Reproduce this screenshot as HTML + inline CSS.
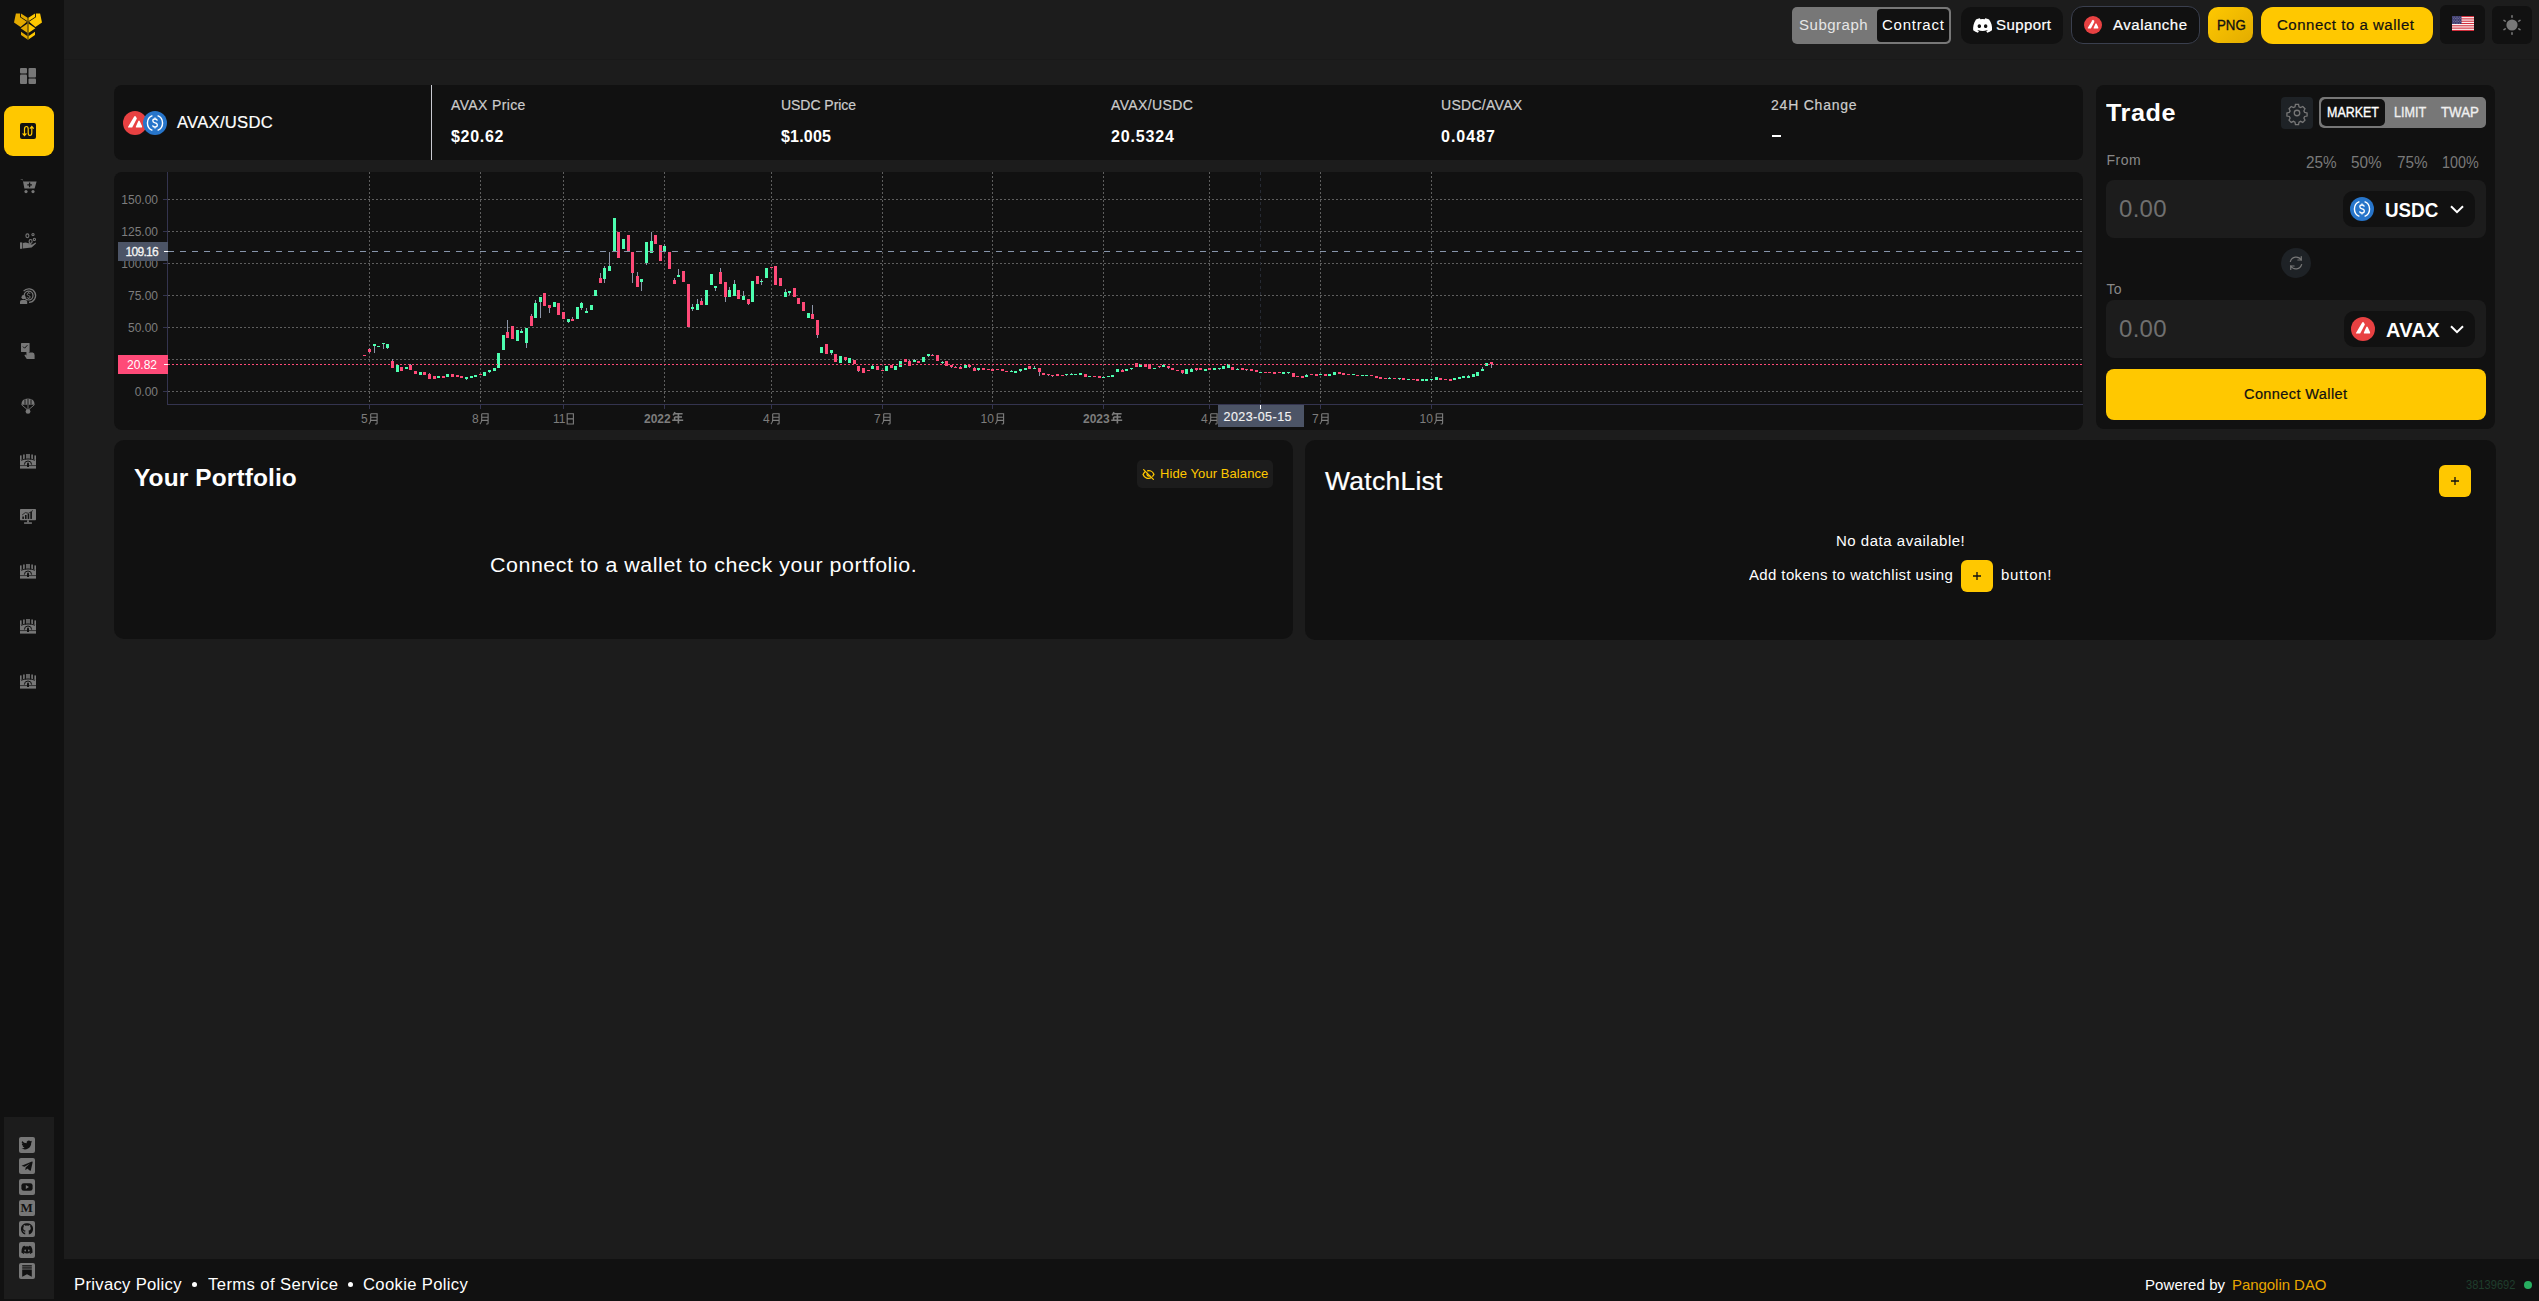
<!DOCTYPE html><html><head><meta charset="utf-8"><title>Pangolin</title><style>
*{margin:0;padding:0;box-sizing:border-box}
html,body{width:2539px;height:1301px;overflow:hidden;background:#1c1c1c;font-family:"Liberation Sans",sans-serif}
.t{position:absolute;white-space:nowrap}
.b{position:absolute}
svg{position:absolute;overflow:visible}
svg text{font-family:"Liberation Sans",sans-serif}
</style></head><body>
<div class="b" style="left:0px;top:0px;width:64px;height:1301px;background:#111111;border-radius:0px;"></div>
<div class="b" style="left:64px;top:1259px;width:2475px;height:42px;background:#111111;border-radius:0px;"></div>
<div class="b" style="left:64px;top:59px;width:2475px;height:1px;background:#191919;border-radius:0px;"></div>
<svg width="64" height="50" viewBox="0 -0.8 64 50" style="position:absolute;left:0;top:0"><g fill="#e3aa00"><path d="M15.9 12.6H20.1V16.4L26.9 21L20.6 26.1L14 21.6Z"/><path d="M21 12.8L27.6 17V20.4L21 16.1Z"/><path d="M20.6 27.5L27.6 22.6V32.3Z"/><path d="M21 31L27.6 35.5V38.8L21 34.2Z"/></g><g fill="#ffc800"><path d="M40.1 12.6H35.9V16.4L29.1 21L35.4 26.1L42 21.6Z"/><path d="M35 12.8L28.4 17V20.4L35 16.1Z"/><path d="M35.4 27.5L28.4 22.6V32.3Z"/><path d="M35 31L28.4 35.5V38.8L35 34.2Z"/></g><rect x="27.4" y="17.2" width="1.2" height="21.8" fill="#8a6d08"/></svg>
<svg width="16" height="16" viewBox="0 0 16 16" style="left:20px;top:68px"><g fill="#777"><rect x="0" y="0" width="7" height="5.5" rx="1"/><rect x="8.5" y="0" width="7.5" height="9.5" rx="1"/><rect x="0" y="6.5" width="7" height="9.5" rx="1"/><rect x="8.5" y="10.5" width="7.5" height="5.5" rx="1"/></g></svg>
<div class="b" style="left:4px;top:106px;width:50px;height:50px;background:#ffc800;border-radius:9px"></div>
<svg width="16" height="16" viewBox="0 0 16 16" style="left:20px;top:123px"><rect width="16" height="16" rx="2" fill="#111"/><path d="M4.5 12V6.2Q4.5 3.5 6.5 3.5Q8.2 3.5 8.2 6.2V9.8Q8.2 12.5 9.9 12.5Q11.8 12.5 11.8 9.8V4.2M2.6 10.4L4.5 12.6L6.4 10.4M9.9 5.6L11.8 3.4L13.7 5.6" fill="none" stroke="#ffc800" stroke-width="1.2"/></svg>
<svg width="17" height="16" viewBox="0 0 17 16" style="left:20px;top:178px"><g fill="#777"><path d="M0 1.2H2.6L4.4 10.4H14.6L16.6 3.4H3.2L3 2.2Z"/><circle cx="6" cy="13.6" r="1.6"/><circle cx="13" cy="13.6" r="1.6"/></g><path d="M9.6 4.6V9.2M7.3 6.9H11.9" stroke="#111" stroke-width="1.3"/></svg>
<svg width="18" height="17" viewBox="0 0 18 17" style="left:19px;top:232px"><g fill="#777"><rect x="1" y="10.4" width="2.2" height="6.4"/><path d="M3.8 11Q6.8 9.8 9.2 11.2L11.8 11.2Q12.8 11.4 12 12.4L8 13L13.2 12.6L16.6 10.6Q17.4 10.8 16.8 11.8L12.6 15.6L3.8 16.4Z"/></g><g fill="none" stroke="#777" stroke-width="1.1"><ellipse cx="8.4" cy="3.8" rx="1.5" ry="1.9"/><ellipse cx="11.6" cy="9.4" rx="1.5" ry="1.9"/><circle cx="14" cy="2.6" r="1.1"/><circle cx="15.4" cy="7.4" r="1.1"/></g></svg>
<svg width="16" height="16" viewBox="0 0 16 16" style="left:20px;top:288px"><g fill="none" stroke="#777"><path d="M3.6 3.2A6.8 6.8 0 1 1 9 14.4" stroke-width="1.3"/><circle cx="8.6" cy="7.6" r="4.4" stroke-width="1.2"/><path d="M10.2 5.9Q9.9 5 8.6 5Q7.2 5 7.2 6.3Q7.2 7.3 8.6 7.6Q10.2 7.9 10.2 9Q10.2 10.2 8.6 10.2Q7.2 10.2 7 9.2M8.6 4.2V5M8.6 10.2V11" stroke-width="1"/></g><g fill="#777"><circle cx="3.6" cy="9.2" r="2.1"/><path d="M0 16V13.8Q0 12 2 12H5.2Q7.2 12 7.2 13.8V16Z"/></g></svg>
<svg width="16" height="16" viewBox="0 0 16 16" style="left:20px;top:343px"><g fill="#777"><rect x="1" y="0" width="8.6" height="9" rx="0.6"/><path d="M6.4 6.2Q6.4 4.8 7.6 4.8Q8.8 4.8 8.8 6.2V9.4L12.6 9.6Q14.6 10 14.6 12.2V16H6.8L4.6 12.8Q4.2 11.8 5.4 11.6L6.4 12.6Z"/></g><path d="M3 3.6L4.6 5.2L7.4 2.2" fill="none" stroke="#111" stroke-width="1"/></svg>
<svg width="16" height="16" viewBox="0 0 16 16" style="left:20px;top:398px"><g fill="#777"><path d="M1.4 6.8Q1.4 0.6 8 0.6Q14.6 0.6 14.6 6.8Z"/><circle cx="8" cy="13.4" r="2.4"/></g><g stroke="#777" stroke-width="0.9" fill="none"><path d="M1.6 6.8L7 11.4M14.4 6.8L9 11.4M8 6.8V11"/></g><path d="M5 1.4V6.6M11 1.4V6.6M8 0.8V6.6" stroke="#111" stroke-width="0.9"/></svg>
<svg width="16" height="15" viewBox="0 0 16 15" style="left:20px;top:454px"><g fill="#777"><rect x="0" y="5.6" width="16" height="9"/><rect x="0" y="1.4" width="1.6" height="4.4"/><rect x="14.4" y="1.4" width="1.6" height="4.4"/><rect x="3.1" y="0.5" width="1.6" height="5"/><rect x="6.2" y="0" width="1.6" height="5.6"/><rect x="8.2" y="0" width="1.6" height="5.6"/><rect x="11.3" y="0.5" width="1.6" height="5"/></g><path d="M1 6.4Q8 3.2 15 6.4" fill="none" stroke="#111" stroke-width="0.8"/><path d="M0 11.6H16" stroke="#111" stroke-width="0.7"/><path d="M4.4 10.6A3.6 3.6 0 0 1 11.6 10.6" fill="none" stroke="#111" stroke-width="1"/><path d="M8 8.4a1 1 0 0 0-1 1V13H9V9.4a1 1 0 0 0-1-1Z" fill="#111"/></svg>
<svg width="16" height="15" viewBox="0 0 16 15" style="left:20px;top:564px"><g fill="#777"><rect x="0" y="5.6" width="16" height="9"/><rect x="0" y="1.4" width="1.6" height="4.4"/><rect x="14.4" y="1.4" width="1.6" height="4.4"/><rect x="3.1" y="0.5" width="1.6" height="5"/><rect x="6.2" y="0" width="1.6" height="5.6"/><rect x="8.2" y="0" width="1.6" height="5.6"/><rect x="11.3" y="0.5" width="1.6" height="5"/></g><path d="M1 6.4Q8 3.2 15 6.4" fill="none" stroke="#111" stroke-width="0.8"/><path d="M0 11.6H16" stroke="#111" stroke-width="0.7"/><path d="M4.4 10.6A3.6 3.6 0 0 1 11.6 10.6" fill="none" stroke="#111" stroke-width="1"/><path d="M8 8.4a1 1 0 0 0-1 1V13H9V9.4a1 1 0 0 0-1-1Z" fill="#111"/></svg>
<svg width="16" height="15" viewBox="0 0 16 15" style="left:20px;top:619px"><g fill="#777"><rect x="0" y="5.6" width="16" height="9"/><rect x="0" y="1.4" width="1.6" height="4.4"/><rect x="14.4" y="1.4" width="1.6" height="4.4"/><rect x="3.1" y="0.5" width="1.6" height="5"/><rect x="6.2" y="0" width="1.6" height="5.6"/><rect x="8.2" y="0" width="1.6" height="5.6"/><rect x="11.3" y="0.5" width="1.6" height="5"/></g><path d="M1 6.4Q8 3.2 15 6.4" fill="none" stroke="#111" stroke-width="0.8"/><path d="M0 11.6H16" stroke="#111" stroke-width="0.7"/><path d="M4.4 10.6A3.6 3.6 0 0 1 11.6 10.6" fill="none" stroke="#111" stroke-width="1"/><path d="M8 8.4a1 1 0 0 0-1 1V13H9V9.4a1 1 0 0 0-1-1Z" fill="#111"/></svg>
<svg width="16" height="15" viewBox="0 0 16 15" style="left:20px;top:674px"><g fill="#777"><rect x="0" y="5.6" width="16" height="9"/><rect x="0" y="1.4" width="1.6" height="4.4"/><rect x="14.4" y="1.4" width="1.6" height="4.4"/><rect x="3.1" y="0.5" width="1.6" height="5"/><rect x="6.2" y="0" width="1.6" height="5.6"/><rect x="8.2" y="0" width="1.6" height="5.6"/><rect x="11.3" y="0.5" width="1.6" height="5"/></g><path d="M1 6.4Q8 3.2 15 6.4" fill="none" stroke="#111" stroke-width="0.8"/><path d="M0 11.6H16" stroke="#111" stroke-width="0.7"/><path d="M4.4 10.6A3.6 3.6 0 0 1 11.6 10.6" fill="none" stroke="#111" stroke-width="1"/><path d="M8 8.4a1 1 0 0 0-1 1V13H9V9.4a1 1 0 0 0-1-1Z" fill="#111"/></svg>
<svg width="16" height="15" viewBox="0 0 18 16" style="left:20px;top:509px" preserveAspectRatio="none"><g fill="#777"><rect x="0" y="0" width="18" height="12" rx="0.8"/><rect x="8" y="12" width="2" height="2.4"/><rect x="4.6" y="14.2" width="8.8" height="1.6"/></g><g fill="#111"><rect x="2.6" y="8" width="1.8" height="2.6"/><rect x="5.6" y="6.4" width="1.8" height="4.2"/><rect x="8.6" y="5.2" width="1.8" height="5.4"/><rect x="11.6" y="3.2" width="1.8" height="7.4"/></g><path d="M2.4 6.4L6 3.8L9.6 4.6L14.6 1.6" fill="none" stroke="#111" stroke-width="0.8"/></svg>
<div class="b" style="left:4px;top:1117px;width:50px;height:182px;background:#1c1c1c"></div>
<div class="b" style="left:19px;top:1137px;width:16px;height:16px;background:#777;border-radius:2px"></div>
<div class="b" style="left:19px;top:1158px;width:16px;height:16px;background:#777;border-radius:2px"></div>
<div class="b" style="left:19px;top:1179px;width:16px;height:16px;background:#777;border-radius:2px"></div>
<div class="b" style="left:19px;top:1200px;width:16px;height:16px;background:#777;border-radius:2px"></div>
<div class="b" style="left:19px;top:1221px;width:16px;height:16px;background:#777;border-radius:2px"></div>
<div class="b" style="left:19px;top:1242px;width:16px;height:16px;background:#777;border-radius:2px"></div>
<div class="b" style="left:19px;top:1263px;width:16px;height:16px;background:#777;border-radius:2px"></div>
<svg width="16" height="16" viewBox="0 0 16 16" style="left:19px;top:1137px"><path fill="#111" d="M13.2 4.6a4 4 0 0 1-1.3.4 2.2 2.2 0 0 0 1-1.2 4.5 4.5 0 0 1-1.4.5 2.2 2.2 0 0 0-3.8 2A6.3 6.3 0 0 1 3.1 4a2.2 2.2 0 0 0 .7 3 2.2 2.2 0 0 1-1-.3 2.2 2.2 0 0 0 1.8 2.2 2.2 2.2 0 0 1-1 0 2.2 2.2 0 0 0 2 1.5A4.4 4.4 0 0 1 2.5 11.3 6.3 6.3 0 0 0 12.2 5.7a4.5 4.5 0 0 0 1-1.1Z"/></svg>
<svg width="16" height="16" viewBox="0 0 16 16" style="left:19px;top:1158px"><path fill="#111" d="M2.6 7.8L13 3.6Q13.8 3.4 13.6 4.4L11.8 12.4Q11.6 13 11 12.7L8.2 10.6L6.8 12Q6.5 12.2 6.4 11.8L6.6 9.4L11 5.4L5.6 8.8L3 8Q2.2 7.9 2.6 7.8Z"/></svg>
<svg width="16" height="16" viewBox="0 0 16 16" style="left:19px;top:1179px"><rect x="2.4" y="4.2" width="11.2" height="7.6" rx="2.4" fill="#111"/><path d="M6.8 6V10L10 8Z" fill="#777"/></svg>
<div class="t" style="left:20.5px;top:1201px;font-family:'Liberation Serif',serif;font-weight:bold;font-size:13px;line-height:13px;color:#111">M</div>
<svg width="16" height="16" viewBox="0 0 16 16" style="left:19px;top:1221px"><path fill="#111" d="M8 2.2A5.8 5.8 0 0 0 6.2 13.6V11.6Q4.6 11.8 4.2 10.6Q3.9 9.9 3.4 9.7Q3.2 9.4 3.8 9.4Q4.4 9.6 4.8 10.3Q5.4 11 6.2 10.6Q6.3 10 6.6 9.7Q4.2 9.4 4.2 7.2Q4.2 6.3 4.8 5.7Q4.6 5 4.9 4.1Q5.6 4 6.6 4.7A5.6 5.6 0 0 1 9.4 4.7Q10.4 4 11.1 4.1Q11.4 5 11.2 5.7Q11.8 6.3 11.8 7.2Q11.8 9.4 9.4 9.7Q9.8 10.1 9.8 10.8V13.6A5.8 5.8 0 0 0 8 2.2Z"/></svg>
<svg width="16" height="16" viewBox="0 0 16 16" style="left:19px;top:1242px"><path fill="#111" d="M12.2 4.4A8.4 8.4 0 0 0 10.2 3.8L9.9 4.4A7.6 7.6 0 0 0 6.1 4.4L5.8 3.8A8.4 8.4 0 0 0 3.8 4.4Q2 7.2 2.4 10.6A8.4 8.4 0 0 0 4.9 11.9L5.4 11.1A5.4 5.4 0 0 1 4.6 10.7L4.8 10.5A6 6 0 0 0 11.2 10.5L11.4 10.7A5.4 5.4 0 0 1 10.6 11.1L11.1 11.9A8.4 8.4 0 0 0 13.6 10.6Q14 7.2 12.2 4.4ZM6.2 9.4Q5.4 9.4 5.4 8.4Q5.4 7.5 6.2 7.5Q7 7.5 7 8.4Q7 9.4 6.2 9.4ZM9.8 9.4Q9 9.4 9 8.4Q9 7.5 9.8 7.5Q10.6 7.5 10.6 8.4Q10.6 9.4 9.8 9.4Z"/></svg>
<svg width="16" height="16" viewBox="0 0 16 16" style="left:19px;top:1263px"><g fill="#111"><rect x="3.2" y="2.2" width="9.6" height="1.3"/><rect x="3.2" y="4.3" width="9.6" height="1.3"/><path d="M3.2 6.4H12.8V13.8L8 11.2L3.2 13.8Z"/></g></svg>
<div class="b" style="left:1792px;top:7px;width:159px;height:37px;background:#777777;border-radius:5px;"></div>
<div class="b" style="left:1877px;top:9px;width:72px;height:33px;background:#111111;border-radius:4px;"></div>
<div class="t" style="left:1799px;top:17.75px;font-size:14px;line-height:14px;color:#e6e6e6;letter-spacing:0.494px;transform:scaleX(1.07);transform-origin:0 0;">Subgraph</div>
<div class="t" style="left:1882px;top:17.75px;font-size:14px;line-height:14px;color:#ffffff;letter-spacing:0.697px;transform:scaleX(1.07);transform-origin:0 0;">Contract</div>
<div class="b" style="left:1961px;top:7px;width:102px;height:37px;background:#111111;border-radius:10px;"></div>
<svg width="19" height="15" viewBox="0 0 71 55" style="left:1973px;top:18px"><path fill="#fff" d="M60.1 4.9A58.5 58.5 0 0 0 45.6.4a40 40 0 0 0-1.8 3.7 54 54 0 0 0-16.2 0A38 38 0 0 0 25.7.4 58.4 58.4 0 0 0 11.2 4.9C2 18.6-.5 32 .7 45.3a58.9 58.9 0 0 0 17.9 9 42 42 0 0 0 3.8-6.2 38 38 0 0 1-5.9-2.8l1.4-1.1a42 42 0 0 0 35.8 0l1.5 1.1a38 38 0 0 1-5.9 2.8 42 42 0 0 0 3.8 6.2 58.7 58.7 0 0 0 17.9-9C72.5 30 68.8 16.7 60.1 4.9ZM23.7 37.1c-3.5 0-6.4-3.2-6.4-7.2s2.8-7.2 6.4-7.2 6.5 3.3 6.4 7.2c0 4-2.8 7.2-6.4 7.2Zm23.6 0c-3.5 0-6.4-3.2-6.4-7.2s2.8-7.2 6.4-7.2 6.5 3.3 6.4 7.2c0 4-2.8 7.2-6.4 7.2Z"/></svg>
<div class="t" style="left:1996px;top:17.75px;font-size:14px;line-height:14px;color:#ffffff;letter-spacing:0.4px;-webkit-text-stroke-width:0.2px;transform:scaleX(1.07);transform-origin:0 0;">Support</div>
<div class="b" style="left:2071px;top:6px;width:129px;height:38px;background:#111111;border-radius:12px;border:1px solid #3a3f4e;"></div>
<div class="b" style="left:2084px;top:16px;width:18px;height:18px"><svg width="18" height="18" viewBox="0 0 24 24"><circle cx="12" cy="12" r="12" fill="#e84142"/><path d="M11.2 5.6Q12 4.4 12.8 5.6L13.9 7.5L9.2 16.6H5.6Q4.6 16.6 5.1 15.7Z" fill="#fff"/><path d="M15.2 10.2Q16 9 16.8 10.2L19 14.9Q19.5 16.6 18.5 16.6H13.3Q12.4 16.6 12.9 15.6Z" fill="#fff"/></svg></div>
<div class="t" style="left:2113px;top:17.75px;font-size:14px;line-height:14px;color:#ffffff;letter-spacing:0.504px;-webkit-text-stroke-width:0.2px;transform:scaleX(1.07);transform-origin:0 0;">Avalanche</div>
<div class="b" style="left:2208px;top:7px;width:45px;height:36px;background:linear-gradient(135deg,#ffc800,#e2ac00);border-radius:10px;"></div>
<div class="t" style="left:2217px;top:17.75px;font-size:14px;line-height:14px;color:#111111;transform:scaleX(0.947);transform-origin:0 0;-webkit-text-stroke-width:0.35px;">PNG</div>
<div class="b" style="left:2261px;top:7px;width:172px;height:37px;background:#ffc800;border-radius:12px;"></div>
<div class="t" style="left:2277px;top:17.75px;font-size:14px;line-height:14px;color:#111111;letter-spacing:0.495px;-webkit-text-stroke-width:0.2px;transform:scaleX(1.07);transform-origin:0 0;">Connect to a wallet</div>
<div class="b" style="left:2440px;top:5px;width:45px;height:39px;background:#111111;border-radius:6px;"></div>
<svg width="22" height="15" viewBox="0 0 22 15" style="left:2452px;top:16px"><rect width="22" height="15" fill="#fff"/><rect y="0.00" width="22" height="1.15" fill="#d22f3c"/><rect y="2.31" width="22" height="1.15" fill="#d22f3c"/><rect y="4.62" width="22" height="1.15" fill="#d22f3c"/><rect y="6.92" width="22" height="1.15" fill="#d22f3c"/><rect y="9.23" width="22" height="1.15" fill="#d22f3c"/><rect y="11.54" width="22" height="1.15" fill="#d22f3c"/><rect y="13.85" width="22" height="1.15" fill="#d22f3c"/><rect width="9.5" height="8" fill="#3c3b6e"/><circle cx="1.0" cy="1.0" r="0.35" fill="#fff"/><circle cx="2.6" cy="1.0" r="0.35" fill="#fff"/><circle cx="4.2" cy="1.0" r="0.35" fill="#fff"/><circle cx="5.8" cy="1.0" r="0.35" fill="#fff"/><circle cx="7.4" cy="1.0" r="0.35" fill="#fff"/><circle cx="1.8" cy="2.5" r="0.35" fill="#fff"/><circle cx="3.4" cy="2.5" r="0.35" fill="#fff"/><circle cx="5.0" cy="2.5" r="0.35" fill="#fff"/><circle cx="6.6" cy="2.5" r="0.35" fill="#fff"/><circle cx="8.2" cy="2.5" r="0.35" fill="#fff"/><circle cx="1.0" cy="4.0" r="0.35" fill="#fff"/><circle cx="2.6" cy="4.0" r="0.35" fill="#fff"/><circle cx="4.2" cy="4.0" r="0.35" fill="#fff"/><circle cx="5.8" cy="4.0" r="0.35" fill="#fff"/><circle cx="7.4" cy="4.0" r="0.35" fill="#fff"/><circle cx="1.8" cy="5.5" r="0.35" fill="#fff"/><circle cx="3.4" cy="5.5" r="0.35" fill="#fff"/><circle cx="5.0" cy="5.5" r="0.35" fill="#fff"/><circle cx="6.6" cy="5.5" r="0.35" fill="#fff"/><circle cx="8.2" cy="5.5" r="0.35" fill="#fff"/><circle cx="1.0" cy="7.0" r="0.35" fill="#fff"/><circle cx="2.6" cy="7.0" r="0.35" fill="#fff"/><circle cx="4.2" cy="7.0" r="0.35" fill="#fff"/><circle cx="5.8" cy="7.0" r="0.35" fill="#fff"/><circle cx="7.4" cy="7.0" r="0.35" fill="#fff"/></svg>
<div class="b" style="left:2492px;top:6px;width:40px;height:38px;background:#111111;border-radius:6px;"></div>
<svg width="20" height="20" viewBox="0 0 20 20" style="left:2502px;top:15px"><circle cx="10" cy="10" r="5.6" fill="#777"/><g stroke="#777" stroke-width="1.6" stroke-linecap="round"><line x1="10" y1="0.8" x2="10" y2="2.2"/><line x1="10" y1="17.8" x2="10" y2="19.2"/><line x1="2" y1="5.4" x2="3.2" y2="6.1"/><line x1="16.8" y1="13.9" x2="18" y2="14.6"/><line x1="2" y1="14.6" x2="3.2" y2="13.9"/><line x1="16.8" y1="6.1" x2="18" y2="5.4"/></g></svg>
<div class="b" style="left:114px;top:85px;width:1969px;height:75px;background:#111111;border-radius:8px;"></div>
<div class="b" style="left:123px;top:111px;width:24px;height:24px"><svg width="24" height="24" viewBox="0 0 24 24"><circle cx="12" cy="12" r="12" fill="#e84142"/><path d="M11.2 5.6Q12 4.4 12.8 5.6L13.9 7.5L9.2 16.6H5.6Q4.6 16.6 5.1 15.7Z" fill="#fff"/><path d="M15.2 10.2Q16 9 16.8 10.2L19 14.9Q19.5 16.6 18.5 16.6H13.3Q12.4 16.6 12.9 15.6Z" fill="#fff"/></svg></div>
<div class="b" style="left:143px;top:111px;width:24px;height:24px;border-radius:12px"><svg width="24" height="24" viewBox="0 0 24 24"><circle cx="12" cy="12" r="12" fill="#2775ca"/><path d="M9.4 4.6A8 8 0 0 0 9.4 19.4M14.6 4.6A8 8 0 0 1 14.6 19.4" fill="none" stroke="#fff" stroke-width="1.4"/><path d="M14.3 9.6Q14 8 12 8Q9.8 8 9.8 9.8Q9.8 11.4 12 11.8Q14.3 12.2 14.3 14Q14.3 16 12 16Q9.8 16 9.6 14.3M12 6.6V8M12 16V17.4" fill="none" stroke="#fff" stroke-width="1.3"/></svg></div>
<div class="t" style="left:177px;top:114.76px;font-size:16px;line-height:16px;color:#ffffff;letter-spacing:0.237px;-webkit-text-stroke-width:0.2px;transform:scaleX(1.04);transform-origin:0 0;">AVAX/USDC</div>
<div class="b" style="left:431px;top:85px;width:1px;height:75px;background:#c9cad1;border-radius:0px;"></div>
<div class="t" style="left:451px;top:98.45px;font-size:14px;line-height:14px;color:#cccccc;letter-spacing:0.36px;-webkit-text-stroke-width:0.2px;">AVAX Price</div>
<div class="t" style="left:451px;top:128.76px;font-size:16px;line-height:16px;color:#ffffff;font-weight:700;letter-spacing:0.7px;">$20.62</div>
<div class="t" style="left:781px;top:98.45px;font-size:14px;line-height:14px;color:#cccccc;letter-spacing:-0.04px;-webkit-text-stroke-width:0.2px;">USDC Price</div>
<div class="t" style="left:781px;top:128.76px;font-size:16px;line-height:16px;color:#ffffff;font-weight:700;letter-spacing:0.2px;">$1.005</div>
<div class="t" style="left:1111px;top:98.45px;font-size:14px;line-height:14px;color:#cccccc;letter-spacing:0.38px;-webkit-text-stroke-width:0.2px;">AVAX/USDC</div>
<div class="t" style="left:1111px;top:128.76px;font-size:16px;line-height:16px;color:#ffffff;font-weight:700;letter-spacing:0.83px;">20.5324</div>
<div class="t" style="left:1441px;top:98.45px;font-size:14px;line-height:14px;color:#cccccc;letter-spacing:0.29px;-webkit-text-stroke-width:0.2px;">USDC/AVAX</div>
<div class="t" style="left:1441px;top:128.76px;font-size:16px;line-height:16px;color:#ffffff;font-weight:700;letter-spacing:1.0px;">0.0487</div>
<div class="t" style="left:1771px;top:98.45px;font-size:14px;line-height:14px;color:#cccccc;letter-spacing:0.78px;-webkit-text-stroke-width:0.2px;">24H Change</div>
<div class="b" style="left:1772px;top:135px;width:9px;height:2px;background:#ffffff;border-radius:0px;"></div>
<div class="b" style="left:114px;top:172px;width:1969px;height:258px;background:#111111;border-radius:8px;"></div>
<svg class="chart" width="1969" height="258" viewBox="114 172 1969 258" style="position:absolute;left:114px;top:172px">
<line x1="168" y1="199.5" x2="2083" y2="199.5" stroke="#5e5e5e" stroke-width="1" stroke-dasharray="2 2"/>
<line x1="168" y1="231.5" x2="2083" y2="231.5" stroke="#5e5e5e" stroke-width="1" stroke-dasharray="2 2"/>
<line x1="168" y1="263.5" x2="2083" y2="263.5" stroke="#5e5e5e" stroke-width="1" stroke-dasharray="2 2"/>
<line x1="168" y1="295.5" x2="2083" y2="295.5" stroke="#5e5e5e" stroke-width="1" stroke-dasharray="2 2"/>
<line x1="168" y1="327.5" x2="2083" y2="327.5" stroke="#5e5e5e" stroke-width="1" stroke-dasharray="2 2"/>
<line x1="168" y1="359.5" x2="2083" y2="359.5" stroke="#5e5e5e" stroke-width="1" stroke-dasharray="2 2"/>
<line x1="168" y1="391.5" x2="2083" y2="391.5" stroke="#5e5e5e" stroke-width="1" stroke-dasharray="2 2"/>
<line x1="369.5" y1="172" x2="369.5" y2="404" stroke="#5e5e5e" stroke-width="1" stroke-dasharray="2 2"/>
<line x1="480.5" y1="172" x2="480.5" y2="404" stroke="#5e5e5e" stroke-width="1" stroke-dasharray="2 2"/>
<line x1="563.5" y1="172" x2="563.5" y2="404" stroke="#5e5e5e" stroke-width="1" stroke-dasharray="2 2"/>
<line x1="664.5" y1="172" x2="664.5" y2="404" stroke="#5e5e5e" stroke-width="1" stroke-dasharray="2 2"/>
<line x1="771.5" y1="172" x2="771.5" y2="404" stroke="#5e5e5e" stroke-width="1" stroke-dasharray="2 2"/>
<line x1="882.5" y1="172" x2="882.5" y2="404" stroke="#5e5e5e" stroke-width="1" stroke-dasharray="2 2"/>
<line x1="992.5" y1="172" x2="992.5" y2="404" stroke="#5e5e5e" stroke-width="1" stroke-dasharray="2 2"/>
<line x1="1103.5" y1="172" x2="1103.5" y2="404" stroke="#5e5e5e" stroke-width="1" stroke-dasharray="2 2"/>
<line x1="1209.5" y1="172" x2="1209.5" y2="404" stroke="#5e5e5e" stroke-width="1" stroke-dasharray="2 2"/>
<line x1="1320.5" y1="172" x2="1320.5" y2="404" stroke="#5e5e5e" stroke-width="1" stroke-dasharray="2 2"/>
<line x1="1431.5" y1="172" x2="1431.5" y2="404" stroke="#5e5e5e" stroke-width="1" stroke-dasharray="2 2"/>
<line x1="1260.5" y1="172" x2="1260.5" y2="404" stroke="#262a33" stroke-width="1" stroke-dasharray="3 3"/>
<line x1="167.5" y1="172" x2="167.5" y2="405" stroke="#34344f" stroke-width="1"/>
<line x1="167" y1="404.5" x2="2083" y2="404.5" stroke="#34344f" stroke-width="1"/>
<line x1="163" y1="199.5" x2="167" y2="199.5" stroke="#34344f" stroke-width="1"/>
<line x1="163" y1="231.5" x2="167" y2="231.5" stroke="#34344f" stroke-width="1"/>
<line x1="163" y1="263.5" x2="167" y2="263.5" stroke="#34344f" stroke-width="1"/>
<line x1="163" y1="295.5" x2="167" y2="295.5" stroke="#34344f" stroke-width="1"/>
<line x1="163" y1="327.5" x2="167" y2="327.5" stroke="#34344f" stroke-width="1"/>
<line x1="163" y1="359.5" x2="167" y2="359.5" stroke="#34344f" stroke-width="1"/>
<line x1="163" y1="391.5" x2="167" y2="391.5" stroke="#34344f" stroke-width="1"/>
<line x1="369.5" y1="405" x2="369.5" y2="409" stroke="#34344f" stroke-width="1"/>
<line x1="480.5" y1="405" x2="480.5" y2="409" stroke="#34344f" stroke-width="1"/>
<line x1="563.5" y1="405" x2="563.5" y2="409" stroke="#34344f" stroke-width="1"/>
<line x1="664.5" y1="405" x2="664.5" y2="409" stroke="#34344f" stroke-width="1"/>
<line x1="771.5" y1="405" x2="771.5" y2="409" stroke="#34344f" stroke-width="1"/>
<line x1="882.5" y1="405" x2="882.5" y2="409" stroke="#34344f" stroke-width="1"/>
<line x1="992.5" y1="405" x2="992.5" y2="409" stroke="#34344f" stroke-width="1"/>
<line x1="1103.5" y1="405" x2="1103.5" y2="409" stroke="#34344f" stroke-width="1"/>
<line x1="1209.5" y1="405" x2="1209.5" y2="409" stroke="#34344f" stroke-width="1"/>
<line x1="1320.5" y1="405" x2="1320.5" y2="409" stroke="#34344f" stroke-width="1"/>
<line x1="1431.5" y1="405" x2="1431.5" y2="409" stroke="#34344f" stroke-width="1"/>
<text x="158" y="203.8" text-anchor="end" font-size="12" fill="#7d7d7d">150.00</text>
<text x="158" y="235.8" text-anchor="end" font-size="12" fill="#7d7d7d">125.00</text>
<text x="158" y="267.8" text-anchor="end" font-size="12" fill="#7d7d7d">100.00</text>
<text x="158" y="299.8" text-anchor="end" font-size="12" fill="#7d7d7d">75.00</text>
<text x="158" y="331.8" text-anchor="end" font-size="12" fill="#7d7d7d">50.00</text>
<text x="158" y="363.8" text-anchor="end" font-size="12" fill="#7d7d7d">25.00</text>
<text x="158" y="395.8" text-anchor="end" font-size="12" fill="#7d7d7d">0.00</text>
<g shape-rendering="crispEdges">
<rect x="363" y="355" width="3" height="1" fill="#ff4a78"/>
<rect x="369" y="348" width="1" height="1" fill="#8c95a8"/>
<rect x="369" y="352" width="1" height="1" fill="#8c95a8"/>
<rect x="368" y="349" width="3" height="3" fill="#ff4a78"/>
<rect x="374" y="346" width="1" height="7" fill="#8c95a8"/>
<rect x="373" y="344" width="3" height="2" fill="#4dffb0"/>
<rect x="377" y="346" width="3" height="1" fill="#4dffb0"/>
<rect x="383" y="344" width="1" height="5" fill="#8c95a8"/>
<rect x="382" y="343" width="3" height="1" fill="#4dffb0"/>
<rect x="387" y="348" width="1" height="1" fill="#8c95a8"/>
<rect x="386" y="344" width="3" height="4" fill="#4dffb0"/>
<rect x="392" y="359" width="1" height="2" fill="#8c95a8"/>
<rect x="391" y="361" width="3" height="7" fill="#ff4a78"/>
<rect x="396" y="365" width="3" height="7" fill="#4dffb0"/>
<rect x="400" y="367" width="3" height="4" fill="#ff4a78"/>
<rect x="405" y="367" width="3" height="2" fill="#4dffb0"/>
<rect x="410" y="364" width="1" height="1" fill="#8c95a8"/>
<rect x="409" y="365" width="3" height="5" fill="#ff4a78"/>
<rect x="414" y="371" width="3" height="3" fill="#ff4a78"/>
<rect x="419" y="372" width="3" height="3" fill="#4dffb0"/>
<rect x="423" y="372" width="3" height="3" fill="#ff4a78"/>
<rect x="429" y="373" width="1" height="1" fill="#8c95a8"/>
<rect x="428" y="374" width="3" height="5" fill="#ff4a78"/>
<rect x="433" y="376" width="3" height="3" fill="#ff4a78"/>
<rect x="437" y="376" width="3" height="2" fill="#4dffb0"/>
<rect x="442" y="376" width="3" height="2" fill="#ff4a78"/>
<rect x="446" y="374" width="3" height="3" fill="#4dffb0"/>
<rect x="451" y="374" width="3" height="3" fill="#ff4a78"/>
<rect x="456" y="375" width="3" height="2" fill="#ff4a78"/>
<rect x="460" y="376" width="3" height="2" fill="#ff4a78"/>
<rect x="466" y="379" width="1" height="1" fill="#8c95a8"/>
<rect x="465" y="377" width="3" height="2" fill="#4dffb0"/>
<rect x="470" y="376" width="3" height="2" fill="#4dffb0"/>
<rect x="474" y="375" width="3" height="2" fill="#4dffb0"/>
<rect x="479" y="374" width="3" height="1" fill="#ff4a78"/>
<rect x="483" y="372" width="3" height="4" fill="#4dffb0"/>
<rect x="489" y="372" width="1" height="1" fill="#8c95a8"/>
<rect x="488" y="370" width="3" height="2" fill="#4dffb0"/>
<rect x="493" y="368" width="3" height="3" fill="#4dffb0"/>
<rect x="497" y="353" width="3" height="15" fill="#4dffb0"/>
<rect x="502" y="335" width="3" height="15" fill="#4dffb0"/>
<rect x="507" y="320" width="1" height="12" fill="#8c95a8"/>
<rect x="506" y="332" width="3" height="6" fill="#ff4a78"/>
<rect x="511" y="326" width="3" height="13" fill="#ff4a78"/>
<rect x="516" y="330" width="3" height="11" fill="#4dffb0"/>
<rect x="521" y="329" width="1" height="2" fill="#8c95a8"/>
<rect x="520" y="331" width="3" height="2" fill="#4dffb0"/>
<rect x="526" y="343" width="1" height="5" fill="#8c95a8"/>
<rect x="525" y="328" width="3" height="15" fill="#4dffb0"/>
<rect x="531" y="314" width="1" height="2" fill="#8c95a8"/>
<rect x="530" y="316" width="3" height="10" fill="#ff4a78"/>
<rect x="535" y="300" width="1" height="3" fill="#8c95a8"/>
<rect x="534" y="303" width="3" height="15" fill="#4dffb0"/>
<rect x="540" y="302" width="1" height="16" fill="#8c95a8"/>
<rect x="539" y="297" width="3" height="5" fill="#4dffb0"/>
<rect x="543" y="293" width="3" height="13" fill="#ff4a78"/>
<rect x="549" y="308" width="1" height="5" fill="#8c95a8"/>
<rect x="548" y="305" width="3" height="3" fill="#ff4a78"/>
<rect x="553" y="302" width="3" height="5" fill="#4dffb0"/>
<rect x="557" y="303" width="3" height="12" fill="#ff4a78"/>
<rect x="562" y="312" width="3" height="7" fill="#ff4a78"/>
<rect x="568" y="322" width="1" height="1" fill="#8c95a8"/>
<rect x="567" y="319" width="3" height="3" fill="#4dffb0"/>
<rect x="572" y="317" width="1" height="2" fill="#8c95a8"/>
<rect x="571" y="319" width="3" height="2" fill="#ff4a78"/>
<rect x="576" y="307" width="3" height="12" fill="#4dffb0"/>
<rect x="581" y="302" width="1" height="1" fill="#8c95a8"/>
<rect x="581" y="308" width="1" height="2" fill="#8c95a8"/>
<rect x="580" y="303" width="3" height="5" fill="#4dffb0"/>
<rect x="586" y="308" width="1" height="3" fill="#8c95a8"/>
<rect x="585" y="311" width="3" height="2" fill="#4dffb0"/>
<rect x="590" y="305" width="3" height="5" fill="#4dffb0"/>
<rect x="594" y="290" width="3" height="6" fill="#4dffb0"/>
<rect x="600" y="273" width="1" height="5" fill="#8c95a8"/>
<rect x="599" y="278" width="3" height="5" fill="#ff4a78"/>
<rect x="604" y="266" width="1" height="2" fill="#8c95a8"/>
<rect x="604" y="279" width="1" height="4" fill="#8c95a8"/>
<rect x="603" y="268" width="3" height="11" fill="#4dffb0"/>
<rect x="609" y="252" width="1" height="14" fill="#8c95a8"/>
<rect x="608" y="266" width="3" height="5" fill="#4dffb0"/>
<rect x="613" y="218" width="3" height="33" fill="#4dffb0"/>
<rect x="617" y="232" width="3" height="26" fill="#ff4a78"/>
<rect x="622" y="239" width="3" height="10" fill="#4dffb0"/>
<rect x="627" y="235" width="3" height="16" fill="#ff4a78"/>
<rect x="632" y="273" width="1" height="10" fill="#8c95a8"/>
<rect x="631" y="252" width="3" height="21" fill="#ff4a78"/>
<rect x="637" y="272" width="1" height="4" fill="#8c95a8"/>
<rect x="636" y="276" width="3" height="11" fill="#ff4a78"/>
<rect x="641" y="282" width="1" height="9" fill="#8c95a8"/>
<rect x="640" y="279" width="3" height="3" fill="#4dffb0"/>
<rect x="646" y="263" width="1" height="2" fill="#8c95a8"/>
<rect x="645" y="242" width="3" height="21" fill="#4dffb0"/>
<rect x="651" y="232" width="1" height="9" fill="#8c95a8"/>
<rect x="650" y="241" width="3" height="12" fill="#4dffb0"/>
<rect x="654" y="235" width="3" height="9" fill="#ff4a78"/>
<rect x="659" y="245" width="3" height="16" fill="#ff4a78"/>
<rect x="664" y="244" width="1" height="2" fill="#8c95a8"/>
<rect x="663" y="246" width="3" height="5" fill="#4dffb0"/>
<rect x="668" y="252" width="3" height="17" fill="#ff4a78"/>
<rect x="674" y="278" width="1" height="2" fill="#8c95a8"/>
<rect x="673" y="280" width="3" height="4" fill="#ff4a78"/>
<rect x="678" y="269" width="1" height="6" fill="#8c95a8"/>
<rect x="677" y="275" width="3" height="2" fill="#4dffb0"/>
<rect x="682" y="271" width="3" height="11" fill="#ff4a78"/>
<rect x="687" y="284" width="3" height="43" fill="#ff4a78"/>
<rect x="692" y="304" width="1" height="3" fill="#8c95a8"/>
<rect x="692" y="309" width="1" height="2" fill="#8c95a8"/>
<rect x="691" y="307" width="3" height="2" fill="#4dffb0"/>
<rect x="697" y="299" width="1" height="5" fill="#8c95a8"/>
<rect x="696" y="304" width="3" height="6" fill="#4dffb0"/>
<rect x="701" y="298" width="1" height="3" fill="#8c95a8"/>
<rect x="700" y="301" width="3" height="4" fill="#ff4a78"/>
<rect x="705" y="290" width="3" height="15" fill="#4dffb0"/>
<rect x="710" y="274" width="3" height="11" fill="#4dffb0"/>
<rect x="715" y="288" width="1" height="3" fill="#8c95a8"/>
<rect x="714" y="286" width="3" height="2" fill="#4dffb0"/>
<rect x="720" y="268" width="1" height="4" fill="#8c95a8"/>
<rect x="719" y="272" width="3" height="12" fill="#ff4a78"/>
<rect x="725" y="297" width="1" height="5" fill="#8c95a8"/>
<rect x="724" y="282" width="3" height="15" fill="#ff4a78"/>
<rect x="729" y="287" width="1" height="3" fill="#8c95a8"/>
<rect x="728" y="290" width="3" height="7" fill="#4dffb0"/>
<rect x="734" y="280" width="1" height="4" fill="#8c95a8"/>
<rect x="733" y="284" width="3" height="12" fill="#4dffb0"/>
<rect x="737" y="290" width="3" height="9" fill="#ff4a78"/>
<rect x="743" y="291" width="1" height="5" fill="#8c95a8"/>
<rect x="742" y="296" width="3" height="4" fill="#4dffb0"/>
<rect x="748" y="304" width="1" height="1" fill="#8c95a8"/>
<rect x="747" y="299" width="3" height="5" fill="#ff4a78"/>
<rect x="751" y="281" width="3" height="21" fill="#4dffb0"/>
<rect x="756" y="276" width="3" height="8" fill="#ff4a78"/>
<rect x="761" y="279" width="1" height="2" fill="#8c95a8"/>
<rect x="761" y="282" width="1" height="3" fill="#8c95a8"/>
<rect x="760" y="281" width="3" height="1" fill="#4dffb0"/>
<rect x="765" y="268" width="3" height="10" fill="#4dffb0"/>
<rect x="770" y="267" width="3" height="1" fill="#ff4a78"/>
<rect x="774" y="266" width="3" height="19" fill="#ff4a78"/>
<rect x="779" y="278" width="3" height="8" fill="#ff4a78"/>
<rect x="785" y="289" width="1" height="3" fill="#8c95a8"/>
<rect x="784" y="292" width="3" height="5" fill="#4dffb0"/>
<rect x="789" y="293" width="1" height="2" fill="#8c95a8"/>
<rect x="788" y="291" width="3" height="2" fill="#4dffb0"/>
<rect x="793" y="288" width="3" height="9" fill="#ff4a78"/>
<rect x="797" y="298" width="3" height="6" fill="#ff4a78"/>
<rect x="802" y="302" width="3" height="9" fill="#ff4a78"/>
<rect x="807" y="313" width="3" height="5" fill="#4dffb0"/>
<rect x="812" y="305" width="1" height="9" fill="#8c95a8"/>
<rect x="811" y="314" width="3" height="5" fill="#ff4a78"/>
<rect x="817" y="335" width="1" height="3" fill="#8c95a8"/>
<rect x="816" y="320" width="3" height="15" fill="#ff4a78"/>
<rect x="820" y="347" width="3" height="6" fill="#4dffb0"/>
<rect x="825" y="344" width="3" height="10" fill="#ff4a78"/>
<rect x="831" y="353" width="1" height="2" fill="#8c95a8"/>
<rect x="830" y="350" width="3" height="3" fill="#4dffb0"/>
<rect x="834" y="354" width="3" height="8" fill="#ff4a78"/>
<rect x="839" y="356" width="3" height="7" fill="#4dffb0"/>
<rect x="845" y="360" width="1" height="1" fill="#8c95a8"/>
<rect x="844" y="357" width="3" height="3" fill="#ff4a78"/>
<rect x="848" y="358" width="3" height="5" fill="#4dffb0"/>
<rect x="853" y="360" width="3" height="4" fill="#ff4a78"/>
<rect x="858" y="371" width="1" height="1" fill="#8c95a8"/>
<rect x="857" y="366" width="3" height="5" fill="#ff4a78"/>
<rect x="862" y="368" width="3" height="5" fill="#ff4a78"/>
<rect x="867" y="370" width="3" height="1" fill="#ff4a78"/>
<rect x="872" y="365" width="1" height="1" fill="#8c95a8"/>
<rect x="871" y="366" width="3" height="3" fill="#4dffb0"/>
<rect x="876" y="366" width="3" height="4" fill="#ff4a78"/>
<rect x="881" y="370" width="3" height="1" fill="#ff4a78"/>
<rect x="885" y="366" width="3" height="5" fill="#4dffb0"/>
<rect x="890" y="365" width="3" height="3" fill="#ff4a78"/>
<rect x="894" y="366" width="3" height="4" fill="#4dffb0"/>
<rect x="899" y="361" width="3" height="6" fill="#4dffb0"/>
<rect x="904" y="359" width="3" height="3" fill="#ff4a78"/>
<rect x="909" y="360" width="1" height="1" fill="#8c95a8"/>
<rect x="908" y="361" width="3" height="5" fill="#ff4a78"/>
<rect x="914" y="359" width="1" height="1" fill="#8c95a8"/>
<rect x="913" y="360" width="3" height="2" fill="#4dffb0"/>
<rect x="917" y="361" width="3" height="2" fill="#ff4a78"/>
<rect x="922" y="357" width="3" height="5" fill="#4dffb0"/>
<rect x="928" y="356" width="1" height="1" fill="#8c95a8"/>
<rect x="927" y="354" width="3" height="2" fill="#4dffb0"/>
<rect x="932" y="354" width="1" height="1" fill="#8c95a8"/>
<rect x="931" y="355" width="3" height="1" fill="#ff4a78"/>
<rect x="936" y="355" width="3" height="6" fill="#ff4a78"/>
<rect x="942" y="361" width="1" height="1" fill="#8c95a8"/>
<rect x="942" y="363" width="1" height="1" fill="#8c95a8"/>
<rect x="941" y="362" width="3" height="1" fill="#4dffb0"/>
<rect x="945" y="361" width="3" height="5" fill="#ff4a78"/>
<rect x="951" y="367" width="1" height="1" fill="#8c95a8"/>
<rect x="950" y="365" width="3" height="2" fill="#ff4a78"/>
<rect x="955" y="366" width="1" height="1" fill="#8c95a8"/>
<rect x="954" y="367" width="3" height="1" fill="#ff4a78"/>
<rect x="960" y="366" width="1" height="1" fill="#8c95a8"/>
<rect x="959" y="367" width="3" height="2" fill="#ff4a78"/>
<rect x="964" y="365" width="3" height="3" fill="#4dffb0"/>
<rect x="969" y="367" width="1" height="1" fill="#8c95a8"/>
<rect x="968" y="365" width="3" height="2" fill="#ff4a78"/>
<rect x="974" y="367" width="1" height="1" fill="#8c95a8"/>
<rect x="973" y="368" width="3" height="3" fill="#ff4a78"/>
<rect x="978" y="370" width="1" height="1" fill="#8c95a8"/>
<rect x="977" y="368" width="3" height="2" fill="#4dffb0"/>
<rect x="982" y="368" width="3" height="2" fill="#ff4a78"/>
<rect x="987" y="369" width="3" height="1" fill="#ff4a78"/>
<rect x="991" y="369" width="3" height="2" fill="#ff4a78"/>
<rect x="996" y="369" width="3" height="1" fill="#ff4a78"/>
<rect x="1001" y="369" width="3" height="2" fill="#ff4a78"/>
<rect x="1005" y="371" width="3" height="1" fill="#ff4a78"/>
<rect x="1011" y="370" width="1" height="1" fill="#8c95a8"/>
<rect x="1010" y="371" width="3" height="1" fill="#4dffb0"/>
<rect x="1014" y="371" width="3" height="2" fill="#4dffb0"/>
<rect x="1020" y="371" width="1" height="1" fill="#8c95a8"/>
<rect x="1019" y="369" width="3" height="2" fill="#4dffb0"/>
<rect x="1024" y="368" width="3" height="2" fill="#4dffb0"/>
<rect x="1028" y="366" width="3" height="3" fill="#ff4a78"/>
<rect x="1034" y="366" width="1" height="2" fill="#8c95a8"/>
<rect x="1033" y="368" width="3" height="1" fill="#4dffb0"/>
<rect x="1039" y="372" width="1" height="4" fill="#8c95a8"/>
<rect x="1038" y="368" width="3" height="4" fill="#ff4a78"/>
<rect x="1042" y="373" width="3" height="2" fill="#ff4a78"/>
<rect x="1048" y="375" width="1" height="1" fill="#8c95a8"/>
<rect x="1047" y="374" width="3" height="1" fill="#ff4a78"/>
<rect x="1052" y="376" width="1" height="1" fill="#8c95a8"/>
<rect x="1051" y="375" width="3" height="1" fill="#ff4a78"/>
<rect x="1056" y="374" width="3" height="2" fill="#ff4a78"/>
<rect x="1061" y="375" width="3" height="1" fill="#ff4a78"/>
<rect x="1066" y="375" width="1" height="1" fill="#8c95a8"/>
<rect x="1065" y="374" width="3" height="1" fill="#4dffb0"/>
<rect x="1071" y="373" width="1" height="1" fill="#8c95a8"/>
<rect x="1070" y="374" width="3" height="1" fill="#4dffb0"/>
<rect x="1074" y="374" width="3" height="1" fill="#4dffb0"/>
<rect x="1079" y="373" width="3" height="2" fill="#4dffb0"/>
<rect x="1084" y="374" width="3" height="3" fill="#ff4a78"/>
<rect x="1088" y="376" width="3" height="1" fill="#4dffb0"/>
<rect x="1093" y="376" width="3" height="1" fill="#ff4a78"/>
<rect x="1098" y="376" width="3" height="2" fill="#ff4a78"/>
<rect x="1103" y="376" width="1" height="1" fill="#8c95a8"/>
<rect x="1102" y="377" width="3" height="1" fill="#4dffb0"/>
<rect x="1107" y="376" width="3" height="1" fill="#4dffb0"/>
<rect x="1111" y="375" width="3" height="2" fill="#4dffb0"/>
<rect x="1116" y="369" width="3" height="3" fill="#4dffb0"/>
<rect x="1122" y="369" width="1" height="1" fill="#8c95a8"/>
<rect x="1121" y="370" width="3" height="2" fill="#ff4a78"/>
<rect x="1125" y="369" width="3" height="2" fill="#4dffb0"/>
<rect x="1131" y="369" width="1" height="1" fill="#8c95a8"/>
<rect x="1130" y="368" width="3" height="1" fill="#4dffb0"/>
<rect x="1135" y="363" width="3" height="4" fill="#ff4a78"/>
<rect x="1139" y="364" width="3" height="3" fill="#4dffb0"/>
<rect x="1144" y="364" width="3" height="3" fill="#ff4a78"/>
<rect x="1148" y="364" width="3" height="5" fill="#ff4a78"/>
<rect x="1153" y="368" width="3" height="1" fill="#4dffb0"/>
<rect x="1159" y="367" width="1" height="1" fill="#8c95a8"/>
<rect x="1158" y="366" width="3" height="1" fill="#ff4a78"/>
<rect x="1163" y="364" width="1" height="1" fill="#8c95a8"/>
<rect x="1162" y="365" width="3" height="2" fill="#4dffb0"/>
<rect x="1168" y="368" width="1" height="1" fill="#8c95a8"/>
<rect x="1167" y="366" width="3" height="2" fill="#ff4a78"/>
<rect x="1171" y="368" width="3" height="2" fill="#ff4a78"/>
<rect x="1176" y="370" width="3" height="1" fill="#ff4a78"/>
<rect x="1182" y="373" width="1" height="1" fill="#8c95a8"/>
<rect x="1181" y="370" width="3" height="3" fill="#ff4a78"/>
<rect x="1185" y="369" width="3" height="5" fill="#4dffb0"/>
<rect x="1191" y="368" width="1" height="1" fill="#8c95a8"/>
<rect x="1190" y="369" width="3" height="3" fill="#4dffb0"/>
<rect x="1196" y="370" width="1" height="1" fill="#8c95a8"/>
<rect x="1195" y="368" width="3" height="2" fill="#ff4a78"/>
<rect x="1199" y="368" width="3" height="2" fill="#ff4a78"/>
<rect x="1204" y="369" width="3" height="2" fill="#4dffb0"/>
<rect x="1208" y="368" width="3" height="2" fill="#ff4a78"/>
<rect x="1213" y="368" width="3" height="2" fill="#4dffb0"/>
<rect x="1219" y="369" width="1" height="1" fill="#8c95a8"/>
<rect x="1218" y="368" width="3" height="1" fill="#4dffb0"/>
<rect x="1222" y="366" width="3" height="3" fill="#4dffb0"/>
<rect x="1227" y="364" width="3" height="4" fill="#4dffb0"/>
<rect x="1231" y="367" width="3" height="3" fill="#ff4a78"/>
<rect x="1237" y="368" width="1" height="1" fill="#8c95a8"/>
<rect x="1236" y="369" width="3" height="1" fill="#4dffb0"/>
<rect x="1241" y="368" width="3" height="2" fill="#ff4a78"/>
<rect x="1246" y="370" width="1" height="1" fill="#8c95a8"/>
<rect x="1245" y="369" width="3" height="1" fill="#ff4a78"/>
<rect x="1250" y="369" width="3" height="2" fill="#ff4a78"/>
<rect x="1255" y="370" width="3" height="2" fill="#ff4a78"/>
<rect x="1259" y="372" width="3" height="1" fill="#4dffb0"/>
<rect x="1264" y="372" width="3" height="1" fill="#ff4a78"/>
<rect x="1268" y="372" width="3" height="1" fill="#ff4a78"/>
<rect x="1273" y="372" width="3" height="2" fill="#ff4a78"/>
<rect x="1278" y="372" width="3" height="1" fill="#ff4a78"/>
<rect x="1282" y="372" width="3" height="2" fill="#4dffb0"/>
<rect x="1288" y="373" width="1" height="1" fill="#8c95a8"/>
<rect x="1287" y="372" width="3" height="1" fill="#4dffb0"/>
<rect x="1292" y="373" width="3" height="4" fill="#ff4a78"/>
<rect x="1296" y="376" width="3" height="1" fill="#ff4a78"/>
<rect x="1301" y="376" width="3" height="2" fill="#ff4a78"/>
<rect x="1306" y="374" width="1" height="1" fill="#8c95a8"/>
<rect x="1305" y="375" width="3" height="2" fill="#4dffb0"/>
<rect x="1310" y="374" width="3" height="1" fill="#ff4a78"/>
<rect x="1315" y="374" width="3" height="2" fill="#ff4a78"/>
<rect x="1319" y="374" width="3" height="1" fill="#4dffb0"/>
<rect x="1324" y="374" width="3" height="2" fill="#ff4a78"/>
<rect x="1328" y="374" width="3" height="2" fill="#4dffb0"/>
<rect x="1333" y="372" width="3" height="3" fill="#4dffb0"/>
<rect x="1338" y="372" width="3" height="2" fill="#ff4a78"/>
<rect x="1342" y="373" width="3" height="2" fill="#ff4a78"/>
<rect x="1347" y="374" width="3" height="1" fill="#ff4a78"/>
<rect x="1352" y="374" width="3" height="1" fill="#4dffb0"/>
<rect x="1356" y="375" width="3" height="1" fill="#ff4a78"/>
<rect x="1361" y="375" width="3" height="1" fill="#4dffb0"/>
<rect x="1365" y="375" width="3" height="1" fill="#4dffb0"/>
<rect x="1370" y="375" width="3" height="1" fill="#ff4a78"/>
<rect x="1375" y="376" width="3" height="2" fill="#ff4a78"/>
<rect x="1379" y="377" width="3" height="2" fill="#ff4a78"/>
<rect x="1384" y="378" width="3" height="1" fill="#ff4a78"/>
<rect x="1389" y="377" width="1" height="1" fill="#8c95a8"/>
<rect x="1388" y="378" width="3" height="1" fill="#4dffb0"/>
<rect x="1393" y="378" width="3" height="1" fill="#ff4a78"/>
<rect x="1399" y="379" width="1" height="1" fill="#8c95a8"/>
<rect x="1398" y="378" width="3" height="1" fill="#4dffb0"/>
<rect x="1402" y="378" width="3" height="2" fill="#ff4a78"/>
<rect x="1407" y="379" width="3" height="1" fill="#4dffb0"/>
<rect x="1412" y="379" width="3" height="1" fill="#ff4a78"/>
<rect x="1416" y="379" width="3" height="2" fill="#ff4a78"/>
<rect x="1421" y="379" width="3" height="2" fill="#4dffb0"/>
<rect x="1425" y="379" width="3" height="2" fill="#4dffb0"/>
<rect x="1431" y="380" width="1" height="1" fill="#8c95a8"/>
<rect x="1430" y="379" width="3" height="1" fill="#4dffb0"/>
<rect x="1435" y="377" width="3" height="3" fill="#4dffb0"/>
<rect x="1439" y="378" width="3" height="2" fill="#ff4a78"/>
<rect x="1444" y="379" width="3" height="1" fill="#ff4a78"/>
<rect x="1449" y="379" width="3" height="2" fill="#ff4a78"/>
<rect x="1453" y="378" width="3" height="2" fill="#4dffb0"/>
<rect x="1458" y="377" width="3" height="2" fill="#4dffb0"/>
<rect x="1462" y="376" width="3" height="2" fill="#4dffb0"/>
<rect x="1468" y="375" width="1" height="1" fill="#8c95a8"/>
<rect x="1467" y="376" width="3" height="2" fill="#4dffb0"/>
<rect x="1472" y="374" width="3" height="3" fill="#4dffb0"/>
<rect x="1476" y="372" width="3" height="4" fill="#4dffb0"/>
<rect x="1482" y="367" width="1" height="2" fill="#8c95a8"/>
<rect x="1481" y="369" width="3" height="2" fill="#4dffb0"/>
<rect x="1485" y="363" width="3" height="3" fill="#4dffb0"/>
<rect x="1491" y="364" width="1" height="4" fill="#8c95a8"/>
<rect x="1490" y="362" width="3" height="2" fill="#ff4a78"/>
</g>
<line x1="168" y1="251.5" x2="2083" y2="251.5" stroke="#8795ab" stroke-width="1" stroke-dasharray="6 6"/>
<line x1="168" y1="364.5" x2="2083" y2="364.5" stroke="#ff4a78" stroke-width="1" stroke-dasharray="2 2"/>
<rect x="118" y="242" width="50" height="19" fill="#4c5466"/>
<line x1="164" y1="251.5" x2="168" y2="251.5" stroke="#fff" stroke-width="1"/>
<text x="158" y="256" text-anchor="end" font-size="12" fill="#f4f4f4" stroke="#f4f4f4" stroke-width="0.3" letter-spacing="-0.7">109.16</text>
<rect x="118" y="355" width="50" height="19" fill="#ff4a78"/>
<line x1="164" y1="364.5" x2="168" y2="364.5" stroke="#fff" stroke-width="1"/>
<text x="157" y="369" text-anchor="end" font-size="12" fill="#ffffff">20.82</text>
<text x="361.0" y="423" font-size="12" fill="#7d7d7d">5</text><path transform="translate(368.5,413) scale(1.0)" fill="none" stroke="#7d7d7d" stroke-width="1.1" d="M2.2 0.8H8.6V10.2Q8.6 11 7.6 11H6.6M2.2 0.8V6.5Q2.2 9.5 0.4 11.2M2.2 4.2H8.6M2.2 7.4H8.6"/>
<text x="472.0" y="423" font-size="12" fill="#7d7d7d">8</text><path transform="translate(479.5,413) scale(1.0)" fill="none" stroke="#7d7d7d" stroke-width="1.1" d="M2.2 0.8H8.6V10.2Q8.6 11 7.6 11H6.6M2.2 0.8V6.5Q2.2 9.5 0.4 11.2M2.2 4.2H8.6M2.2 7.4H8.6"/>
<text x="553" y="423" font-size="12" fill="#7d7d7d">11</text><path transform="translate(566,413) scale(1.0)" fill="none" stroke="#7d7d7d" stroke-width="1.1" d="M1.2 0.8H7.4V11H1.2ZM1.2 5.9H7.4"/>
<text x="644" y="423" font-size="12" font-weight="bold" fill="#7d7d7d">2022</text><path transform="translate(672,412) scale(1)" fill="none" stroke="#7d7d7d" stroke-width="1.6" d="M3 0.2L1.2 3.4M2.4 1.8H10.6M2.6 5H10M2.6 5V8.2M0.2 8.2H11.2M6.4 1.8V11.4"/>
<text x="763.0" y="423" font-size="12" fill="#7d7d7d">4</text><path transform="translate(770.5,413) scale(1.0)" fill="none" stroke="#7d7d7d" stroke-width="1.1" d="M2.2 0.8H8.6V10.2Q8.6 11 7.6 11H6.6M2.2 0.8V6.5Q2.2 9.5 0.4 11.2M2.2 4.2H8.6M2.2 7.4H8.6"/>
<text x="874.0" y="423" font-size="12" fill="#7d7d7d">7</text><path transform="translate(881.5,413) scale(1.0)" fill="none" stroke="#7d7d7d" stroke-width="1.1" d="M2.2 0.8H8.6V10.2Q8.6 11 7.6 11H6.6M2.2 0.8V6.5Q2.2 9.5 0.4 11.2M2.2 4.2H8.6M2.2 7.4H8.6"/>
<text x="980.5" y="423" font-size="12" fill="#7d7d7d">10</text><path transform="translate(995.0,413) scale(1.0)" fill="none" stroke="#7d7d7d" stroke-width="1.1" d="M2.2 0.8H8.6V10.2Q8.6 11 7.6 11H6.6M2.2 0.8V6.5Q2.2 9.5 0.4 11.2M2.2 4.2H8.6M2.2 7.4H8.6"/>
<text x="1083" y="423" font-size="12" font-weight="bold" fill="#7d7d7d">2023</text><path transform="translate(1111,412) scale(1)" fill="none" stroke="#7d7d7d" stroke-width="1.6" d="M3 0.2L1.2 3.4M2.4 1.8H10.6M2.6 5H10M2.6 5V8.2M0.2 8.2H11.2M6.4 1.8V11.4"/>
<text x="1201.0" y="423" font-size="12" fill="#7d7d7d">4</text><path transform="translate(1208.5,413) scale(1.0)" fill="none" stroke="#7d7d7d" stroke-width="1.1" d="M2.2 0.8H8.6V10.2Q8.6 11 7.6 11H6.6M2.2 0.8V6.5Q2.2 9.5 0.4 11.2M2.2 4.2H8.6M2.2 7.4H8.6"/>
<text x="1312.0" y="423" font-size="12" fill="#7d7d7d">7</text><path transform="translate(1319.5,413) scale(1.0)" fill="none" stroke="#7d7d7d" stroke-width="1.1" d="M2.2 0.8H8.6V10.2Q8.6 11 7.6 11H6.6M2.2 0.8V6.5Q2.2 9.5 0.4 11.2M2.2 4.2H8.6M2.2 7.4H8.6"/>
<text x="1419.5" y="423" font-size="12" fill="#7d7d7d">10</text><path transform="translate(1434.0,413) scale(1.0)" fill="none" stroke="#7d7d7d" stroke-width="1.1" d="M2.2 0.8H8.6V10.2Q8.6 11 7.6 11H6.6M2.2 0.8V6.5Q2.2 9.5 0.4 11.2M2.2 4.2H8.6M2.2 7.4H8.6"/>
<rect x="1218" y="405" width="86" height="22" fill="#4c5466"/>
<line x1="1260.5" y1="405" x2="1260.5" y2="409" stroke="#fff" stroke-width="1"/>
<text x="1223.5" y="420.5" font-size="12.5" fill="#f2f2f2" stroke="#f2f2f2" stroke-width="0.15" letter-spacing="0.45">2023-05-15</text>
</svg>
<div class="b" style="left:2096px;top:85px;width:399px;height:344px;background:#111111;border-radius:8px;"></div>
<div class="t" style="left:2106px;top:100.98px;font-size:24px;line-height:24px;color:#ffffff;font-weight:700;letter-spacing:0.548px;transform:scaleX(1.05);transform-origin:0 0;">Trade</div>
<div class="b" style="left:2281px;top:97px;width:32px;height:32px;background:#1e2226;border-radius:4px;"></div>
<svg width="22" height="22" viewBox="0 0 24 24" style="left:2286px;top:102px"><path fill="none" stroke="#777" stroke-width="1.4" d="M10.3 2.6h3.4l.5 2.6 1.7.9 2.4-1.2 2.4 2.4-1.2 2.4.9 1.7 2.6.5v3.4l-2.6.5-.9 1.7 1.2 2.4-2.4 2.4-2.4-1.2-1.7.9-.5 2.6h-3.4l-.5-2.6-1.7-.9-2.4 1.2-2.4-2.4 1.2-2.4-.9-1.7-2.6-.5v-3.4l2.6-.5.9-1.7-1.2-2.4 2.4-2.4 2.4 1.2 1.7-.9z"/><circle cx="12" cy="12" r="3" fill="none" stroke="#777" stroke-width="1.4"/></svg>
<div class="b" style="left:2319px;top:97px;width:167px;height:31px;background:#777777;border-radius:5px;"></div>
<div class="b" style="left:2321px;top:99px;width:64px;height:27px;background:#111111;border-radius:5px;"></div>
<div class="t" style="left:2326.5px;top:105.35px;font-size:14px;line-height:14px;color:#ffffff;transform:scaleX(0.89);transform-origin:0 0;-webkit-text-stroke-width:0.35px;">MARKET</div>
<div class="t" style="left:2393.5px;top:105.35px;font-size:14px;line-height:14px;color:#f0f0f0;transform:scaleX(0.9);transform-origin:0 0;-webkit-text-stroke-width:0.35px;">LIMIT</div>
<div class="t" style="left:2440.5px;top:105.35px;font-size:14px;line-height:14px;color:#f0f0f0;transform:scaleX(0.95);transform-origin:0 0;-webkit-text-stroke-width:0.35px;">TWAP</div>
<div class="t" style="left:2106.5px;top:153.15px;font-size:14px;line-height:14px;color:#888888;letter-spacing:0.5px;">From</div>
<div class="t" style="left:2305.5px;top:155.26px;font-size:16px;line-height:16px;color:#7a7a7a;transform:scaleX(0.956);transform-origin:0 0;">25%</div>
<div class="t" style="left:2351px;top:155.26px;font-size:16px;line-height:16px;color:#7a7a7a;transform:scaleX(0.956);transform-origin:0 0;">50%</div>
<div class="t" style="left:2397px;top:155.26px;font-size:16px;line-height:16px;color:#7a7a7a;transform:scaleX(0.956);transform-origin:0 0;">75%</div>
<div class="t" style="left:2442px;top:155.26px;font-size:16px;line-height:16px;color:#7a7a7a;transform:scaleX(0.895);transform-origin:0 0;">100%</div>
<div class="b" style="left:2106px;top:180px;width:380px;height:58px;background:#1c1c1c;border-radius:8px;"></div>
<div class="t" style="left:2119px;top:197.18px;font-size:24px;line-height:24px;color:#6f6f6f;letter-spacing:0.3px;">0.00</div>
<div class="b" style="left:2343px;top:191px;width:132px;height:36px;background:#111111;border-radius:10px;"></div>
<div class="b" style="left:2350px;top:197px;width:24px;height:24px"><svg width="24" height="24" viewBox="0 0 24 24"><circle cx="12" cy="12" r="12" fill="#2775ca"/><path d="M9.4 4.6A8 8 0 0 0 9.4 19.4M14.6 4.6A8 8 0 0 1 14.6 19.4" fill="none" stroke="#fff" stroke-width="1.4"/><path d="M14.3 9.6Q14 8 12 8Q9.8 8 9.8 9.8Q9.8 11.4 12 11.8Q14.3 12.2 14.3 14Q14.3 16 12 16Q9.8 16 9.6 14.3M12 6.6V8M12 16V17.4" fill="none" stroke="#fff" stroke-width="1.3"/></svg></div>
<div class="t" style="left:2385px;top:199.67px;font-size:20px;line-height:20px;color:#ffffff;font-weight:700;transform:scaleX(0.94);transform-origin:0 0;">USDC</div>
<svg width="14" height="9" viewBox="0 0 14 9" style="left:2450px;top:205px"><path d="M1 1.2L7 7.2L13 1.2" fill="none" stroke="#fff" stroke-width="2"/></svg>
<div class="b" style="left:2281px;top:248px;width:30px;height:30px;background:#1e2226;border-radius:15px;"></div>
<svg width="18" height="18" viewBox="0 0 24 24" style="left:2287px;top:254px"><g fill="none" stroke="#777" stroke-width="1.6" stroke-linecap="round"><path d="M4.5 10A8 8 0 0 1 19 8"/><path d="M19.5 14A8 8 0 0 1 5 16"/><path d="M19 3.5V8H14.5"/><path d="M5 20.5V16H9.5"/></g></svg>
<div class="t" style="left:2106.5px;top:282.15px;font-size:14px;line-height:14px;color:#888888;letter-spacing:0.3px;">To</div>
<div class="b" style="left:2106px;top:300px;width:380px;height:58px;background:#1c1c1c;border-radius:8px;"></div>
<div class="t" style="left:2119px;top:317.18px;font-size:24px;line-height:24px;color:#6f6f6f;letter-spacing:0.3px;">0.00</div>
<div class="b" style="left:2344px;top:311px;width:131px;height:36px;background:#111111;border-radius:10px;"></div>
<div class="b" style="left:2351px;top:317px;width:24px;height:24px"><svg width="24" height="24" viewBox="0 0 24 24"><circle cx="12" cy="12" r="12" fill="#e84142"/><path d="M11.2 5.6Q12 4.4 12.8 5.6L13.9 7.5L9.2 16.6H5.6Q4.6 16.6 5.1 15.7Z" fill="#fff"/><path d="M15.2 10.2Q16 9 16.8 10.2L19 14.9Q19.5 16.6 18.5 16.6H13.3Q12.4 16.6 12.9 15.6Z" fill="#fff"/></svg></div>
<div class="t" style="left:2386px;top:319.67px;font-size:20px;line-height:20px;color:#ffffff;font-weight:700;letter-spacing:0.3px;">AVAX</div>
<svg width="14" height="9" viewBox="0 0 14 9" style="left:2450px;top:325px"><path d="M1 1.2L7 7.2L13 1.2" fill="none" stroke="#fff" stroke-width="2"/></svg>
<div class="b" style="left:2106px;top:369px;width:380px;height:51px;background:#ffc800;border-radius:8px;"></div>
<div class="t" style="left:2244px;top:387.45px;font-size:14px;line-height:14px;color:#111111;letter-spacing:0.359px;-webkit-text-stroke-width:0.2px;transform:scaleX(1.04);transform-origin:0 0;">Connect Wallet</div>
<div class="b" style="left:114px;top:440px;width:1179px;height:199px;background:#111111;border-radius:10px;"></div>
<div class="t" style="left:134px;top:465.98px;font-size:24px;line-height:24px;color:#ffffff;font-weight:700;letter-spacing:0.104px;transform:scaleX(1.02);transform-origin:0 0;">Your Portfolio</div>
<div class="b" style="left:1137px;top:460px;width:136px;height:28px;background:#1c1c1c;border-radius:5px;"></div>
<svg width="13" height="13" viewBox="0 0 24 24" style="left:1141.5px;top:467.5px"><g fill="none" stroke="#ffc800" stroke-width="2.4" stroke-linecap="round"><path d="M3 3L21 21"/><path d="M10.6 5.1A10 10 0 0 1 22 12a14 14 0 0 1-2.4 3.1M6.2 6.6A14 14 0 0 0 2 12a10.4 10.4 0 0 0 15.5 5.4"/><path d="M9.9 9.9a3 3 0 0 0 4.2 4.2"/></g></svg>
<div class="t" style="left:1160px;top:467.20px;font-size:13px;line-height:13px;color:#ffc800;letter-spacing:0.08px;">Hide Your Balance</div>
<div class="t" style="left:490px;top:555.07px;font-size:20px;line-height:20px;color:#ffffff;letter-spacing:0.507px;transform:scaleX(1.07);transform-origin:0 0;">Connect to a wallet to check your portfolio.</div>
<div class="b" style="left:1305px;top:440px;width:1191px;height:200px;background:#111111;border-radius:10px;"></div>
<div class="t" style="left:1325px;top:469.24px;font-size:25px;line-height:25px;color:#ffffff;letter-spacing:0.247px;-webkit-text-stroke-width:0.2px;transform:scaleX(1.06);transform-origin:0 0;">WatchList</div>
<div class="b" style="left:2439px;top:465px;width:32px;height:32px;background:#ffc800;border-radius:6px;"></div>
<svg width="10" height="10" viewBox="0 0 10 10" style="left:2450px;top:476px"><path d="M5 1V9M1 5H9" stroke="#111" stroke-width="1.3"/></svg>
<div class="t" style="left:1836px;top:534.15px;font-size:14px;line-height:14px;color:#ffffff;letter-spacing:0.485px;transform:scaleX(1.07);transform-origin:0 0;">No data available!</div>
<div class="t" style="left:1749px;top:568.15px;font-size:14px;line-height:14px;color:#ffffff;letter-spacing:0.358px;transform:scaleX(1.07);transform-origin:0 0;">Add tokens to watchlist using</div>
<div class="b" style="left:1961px;top:560px;width:32px;height:32px;background:#ffc800;border-radius:6px;"></div>
<svg width="10" height="10" viewBox="0 0 10 10" style="left:1972px;top:571px"><path d="M5 1V9M1 5H9" stroke="#111" stroke-width="1.3"/></svg>
<div class="t" style="left:2001px;top:568.15px;font-size:14px;line-height:14px;color:#ffffff;letter-spacing:0.736px;transform:scaleX(1.07);transform-origin:0 0;">button!</div>
<div class="t" style="left:74px;top:1276.76px;font-size:16px;line-height:16px;color:#ffffff;letter-spacing:0.295px;transform:scaleX(1.04);transform-origin:0 0;">Privacy Policy</div>
<div class="b" style="left:192px;top:1282px;width:5px;height:5px;background:#ffffff;border-radius:3px;"></div>
<div class="t" style="left:208px;top:1276.76px;font-size:16px;line-height:16px;color:#ffffff;letter-spacing:0.392px;transform:scaleX(1.04);transform-origin:0 0;">Terms of Service</div>
<div class="b" style="left:348px;top:1282px;width:5px;height:5px;background:#ffffff;border-radius:3px;"></div>
<div class="t" style="left:363px;top:1276.76px;font-size:16px;line-height:16px;color:#ffffff;letter-spacing:0.317px;transform:scaleX(1.04);transform-origin:0 0;">Cookie Policy</div>
<div class="t" style="left:2145px;top:1276.80px;font-size:15px;line-height:15px;color:#ffffff;letter-spacing:0.1px;">Powered by</div>
<div class="t" style="left:2232px;top:1276.80px;font-size:15px;line-height:15px;color:#e8a600;letter-spacing:-0.05px;">Pangolin DAO</div>
<div class="t" style="left:2466px;top:1279.34px;font-size:12px;line-height:12px;color:#1f3d2c;transform:scaleX(0.926);transform-origin:0 0;">38139692</div>
<div class="b" style="left:2524px;top:1281px;width:8px;height:8px;background:#27ae60;border-radius:4px;"></div>
</body></html>
